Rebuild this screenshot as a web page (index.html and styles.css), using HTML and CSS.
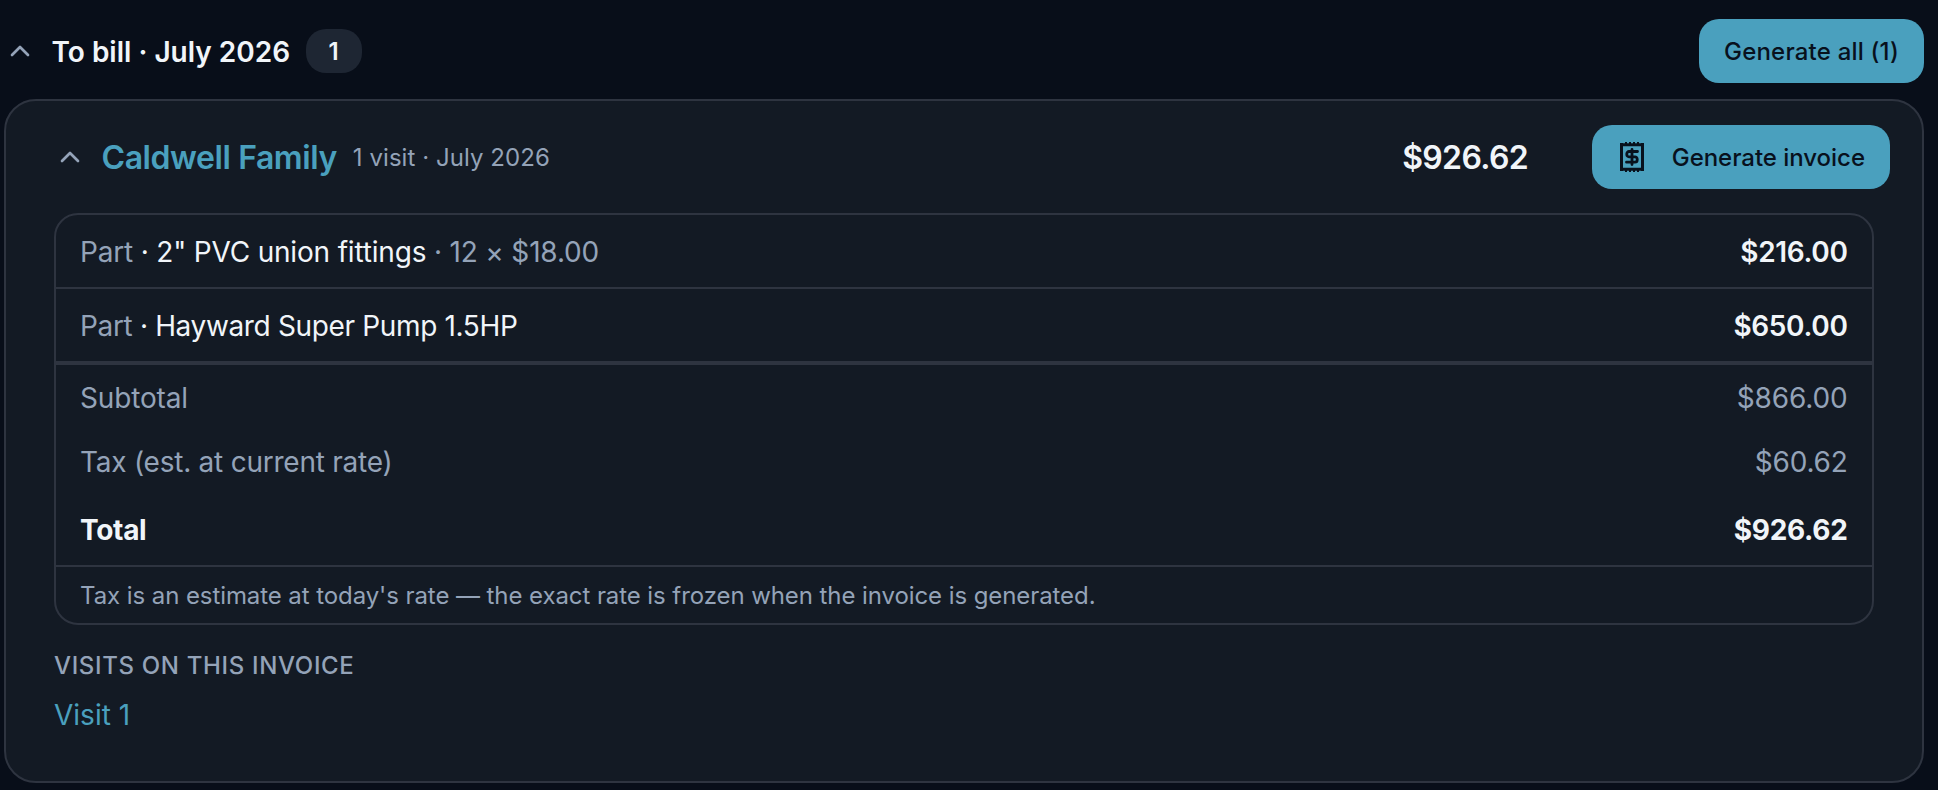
FILE: index.html
```html
<!DOCTYPE html>
<html lang="en">
<head>
  <meta charset="UTF-8">
  <title>To bill</title>
  <meta name="viewport" content="width=device-width, initial-scale=1.0">
  <link rel="stylesheet" href="styles.css">
</head>
<body>

  <section class="billing">
    <header class="billing-header">
      <svg class="chevron" viewBox="0 0 24 24"><path d="m18 15-6-6-6 6"/></svg>
      <h2>To bill · July 2026</h2>
      <span class="badge">1</span>
      <button class="btn btn-all">Generate all (1)</button>
    </header>

    <div class="card">
      <div class="card-header">
        <svg class="chevron" viewBox="0 0 24 24"><path d="m18 15-6-6-6 6"/></svg>
        <a class="customer">Caldwell Family</a>
        <span class="meta">1 visit · July 2026</span>
        <span class="amount">$926.62</span>
        <button class="btn btn-invoice">
          <svg class="receipt" viewBox="0 0 24 30">
            <path class="paper" d="M1.5 1v28M22.5 1v28M1.5 2.8h21M1.5 27.2h21"/>
            <path class="teeth" d="M5 1h2M9 1h2M13 1h2M17 1h2M5 29h2M9 29h2M13 29h2M17 29h2"/>
            <path class="dollar" d="M17.5 9.5H9a2.2 2.2 0 0 0-2.2 2.2v.8A2.2 2.2 0 0 0 9 14.8h6a2.2 2.2 0 0 1 2.2 2.2v1a2.2 2.2 0 0 1-2.2 2.2H6.5M12 7.5v15"/>
          </svg>
          Generate invoice
        </button>
      </div>

      <div class="lines">
        <div class="line item">
          <span class="name"><span class="muted">Part</span> · 2" PVC union fittings <span class="muted">· 12 × $18.00</span></span>
          <span class="price">$216.00</span>
        </div>
        <div class="line item">
          <span class="name name-tight"><span class="muted">Part</span> · Hayward Super Pump 1.5HP</span>
          <span class="price">$650.00</span>
        </div>
        <div class="line subtotal">
          <span>Subtotal</span>
          <span>$866.00</span>
        </div>
        <div class="line tax">
          <span>Tax (est. at current rate)</span>
          <span>$60.62</span>
        </div>
        <div class="line total">
          <span>Total</span>
          <span>$926.62</span>
        </div>
        <p class="note">Tax is an estimate at today's rate — the exact rate is frozen when the invoice is generated.</p>
      </div>

      <h3>Visits on this invoice</h3>
      <a class="visit">Visit 1</a>
    </div>
  </section>

</body>
</html>
```
FILE: styles.css
```css
* {
  margin: 0;
  padding: 0;
  box-sizing: border-box;
}

body {
  height: 100vh;
  overflow: hidden;
  background: #080e19;
  color: #f1f5f9;
  font-family: Inter, sans-serif;
  font-size: 28px;
  line-height: 40px;
}

.billing {
  padding: 19px 14px 0 4px;
}

.billing-header {
  display: flex;
  align-items: center;
  height: 64px;
  margin-bottom: 16px;
}

.chevron {
  width: 32px;
  height: 32px;
  margin-right: 15.5px;
  fill: none;
  stroke: #94a3b8;
  stroke-width: 2;
  stroke-linecap: round;
  stroke-linejoin: round;
}

h2 {
  padding-top: 2px;
  font-size: 28px;
  font-weight: 600;
}

.badge {
  height: 44px;
  width: 56px;
  margin-left: 15.5px;
  border-radius: 20px;
  background: #1e2633;
  font-size: 24px;
  font-weight: 600;
  line-height: 45px;
  text-align: center;
}

.btn {
  display: flex;
  align-items: center;
  justify-content: center;
  height: 64px;
  border: none;
  border-radius: 20px;
  background: #4aa0be;
  color: #08111d;
  font-family: inherit;
  font-size: 24px;
  font-weight: 500;
  letter-spacing: 0.2px;
  cursor: pointer;
}

.btn-all {
  width: 225px;
  margin-left: auto;
}

.btn-invoice {
  justify-content: flex-end;
  width: 298px;
  margin-left: 64px;
  padding-right: 25px;
  gap: 28px;
  letter-spacing: -0.03px;
}

.receipt {
  width: 24px;
  height: 30px;
  fill: none;
  stroke: #08111d;
}

.paper {
  stroke-width: 3;
}

.teeth {
  stroke-width: 2;
}

.dollar {
  stroke-width: 2.8;
  stroke-linecap: round;
}

.card {
  height: 684px;
  padding: 24px 32px 0 48px;
  border: 2px solid #2e3440;
  border-radius: 32px;
  background: #131a24;
}

.card-header {
  display: flex;
  align-items: center;
  height: 64px;
  margin-bottom: 24px;
}

.customer {
  padding-top: 2px;
  color: #4aa0be;
  font-size: 32px;
  font-weight: 600;
  letter-spacing: -0.42px;
}

.meta {
  margin-left: 16px;
  padding-top: 2px;
  color: #94a3b8;
  font-size: 24px;
  letter-spacing: 0.06px;
}

.amount {
  margin-left: auto;
  padding-top: 2px;
  font-size: 32px;
  font-weight: 600;
  letter-spacing: -0.65px;
}

.lines {
  height: 412px;
  margin-right: 16px;
  border: 2px solid #2e3440;
  border-radius: 24px;
}

.line {
  display: flex;
  align-items: center;
  justify-content: space-between;
  height: 64px;
  padding: 2px 24.5px 0 24px;
}

.item {
  height: 74px;
  border-bottom: 2px solid #2e3440;
}

.name {
  letter-spacing: -0.18px;
}

.name-tight {
  letter-spacing: -0.35px;
}

.price {
  font-weight: 600;
  letter-spacing: -0.35px;
}

.muted,
.subtotal,
.tax {
  color: #94a3b8;
}

.subtotal {
  height: 66px;
  border-top: 2px solid #2e3440;
  letter-spacing: -0.15px;
}

.tax {
  letter-spacing: -0.24px;
}

.total {
  height: 72px;
  font-weight: 700;
  letter-spacing: -0.3px;
}

.note {
  padding: 9px 24px 0;
  border-top: 2px solid #2e3440;
  color: #94a3b8;
  font-size: 24px;
  letter-spacing: -0.08px;
}

h3 {
  margin-top: 21px;
  color: #94a3b8;
  font-size: 24px;
  font-weight: 500;
  letter-spacing: 0.66px;
  text-transform: uppercase;
}

.visit {
  display: block;
  margin-top: 9px;
  color: #4aa0be;
}
```
